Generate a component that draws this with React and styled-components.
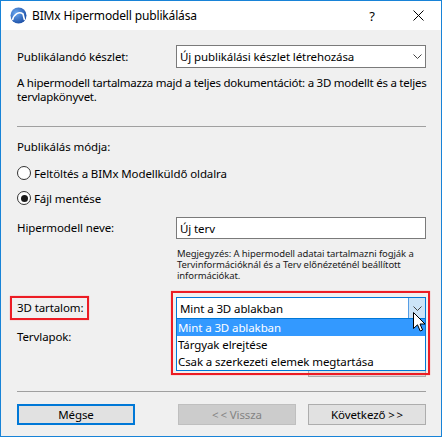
import React from 'react'
import styled, { createGlobalStyle } from 'styled-components'

const GlobalStyle = createGlobalStyle`
	html, body {
		margin: 0;
		padding: 0;
		background: #ffffff;
	}
	body {
		font-family: "Noto Sans", "Open Sans", sans-serif;
		font-size: 11.5px;
		letter-spacing: -0.1px;
		color: #000;
	}
	* {
		box-sizing: border-box;
	}
`

const Window = styled.div`
	width: 442px;
	height: 437px;
	border: 1px solid #1883d7;
	background: #f0f0f0;
	display: flex;
	flex-direction: column;
`

const TitleBar = styled.div`
	height: 29px;
	background: #fff;
	display: flex;
	align-items: center;
	padding-left: 9px;
`

const Title = styled.span`
	margin-left: 5px;
	flex: 1;
	font-size: 12px;
	letter-spacing: -0.15px;
	line-height: 16px;
`

const TitleButton = styled.span`
	width: ${p => p.w}px;
	display: flex;
	justify-content: center;
	align-items: center;
	font-size: 13px;
`

const Body = styled.div`
	flex: 1;
	display: flex;
	flex-direction: column;
	padding: 0 15px 0 16px;
`

const Row = styled.div`
	display: flex;
	align-items: center;
	margin-top: ${p => p.top}px;
`

const Label = styled.div`
	width: 159px;
	flex-shrink: 0;
	line-height: 14px;
`

const Highlight = styled.span`
	display: inline-block;
	margin-left: -7px;
	padding: 3px 4px 3px 5px;
	border: 2px solid #ec1c24;
	box-shadow: 0 0 1px #ff8080;
	line-height: 14px;
`

const Field = styled.div`
	flex: 1;
	height: ${p => p.h || 23}px;
	background: #fff;
	border: 1px solid ${p => (p.focus ? '#0078d7' : '#7a7a7a')};
	display: flex;
	align-items: center;
	padding-left: 3px;
`

const FieldText = styled.span`
	flex: 1;
	white-space: nowrap;
`

const DropArrow = styled.span`
	width: 17px;
	height: 100%;
	display: flex;
	align-items: center;
	justify-content: center;
	background: ${p => (p.active ? '#cce4f7' : 'transparent')};
	border-left: 1px solid ${p => (p.active ? '#569de5' : 'transparent')};
`

const Description = styled.p`
	margin: 8px 0 0;
	line-height: 14px;
	width: 424px;
	letter-spacing: -0.25px;
`

const Separator = styled.div`
	height: 1px;
	background: #a0a0a0;
	margin-top: ${p => p.top}px;
`

const SectionTitle = styled.div`
	margin-top: 13px;
	line-height: 14px;
`

const RadioRow = styled.div`
	display: flex;
	align-items: center;
	height: 16px;
	margin-top: ${p => p.top}px;
`

const RadioCircle = styled.span`
	width: 14px;
	height: 14px;
	border-radius: 50%;
	border: 1px solid #333;
	background: #fff;
	display: flex;
	align-items: center;
	justify-content: center;
	margin-right: 3px;

	&::after {
		content: '';
		width: 7px;
		height: 7px;
		border-radius: 50%;
		background: #1a1a1a;
		display: ${p => (p.checked ? 'block' : 'none')};
	}
`

const Note = styled.div`
	margin: 9px 0 0 160px;
	font-size: 9.5px;
	line-height: 11px;
	color: #1a1a1a;
	width: 250px;
`

const ComboWrap = styled.div`
	flex: 1;
	position: relative;
`

const Popup = styled.div`
	position: absolute;
	left: 0;
	right: 0;
	top: 100%;
	background: #fff;
	border: 1px solid #0078d7;
	border-top: none;
	z-index: 2;
`

const Option = styled.div`
	height: 17px;
	line-height: 17px;
	padding-left: 1px;
	background: ${p => (p.selected ? '#3399ff' : '#fff')};
	color: ${p => (p.selected ? '#fff' : '#000')};
	white-space: nowrap;
`

const RedFrame = styled.div`
	position: absolute;
	left: -5px;
	right: -4px;
	top: -6px;
	height: 84px;
	border: 2px solid #ec1c24;
	box-shadow: 0 0 1px #ff8080;
	z-index: 3;
	pointer-events: none;
`

const Cursor = styled.svg`
	position: absolute;
	left: 237px;
	top: 15px;
	z-index: 4;
`

const Button = styled.button`
	width: 118px;
	height: ${p => p.h || 21}px;
	font-family: inherit;
	font-size: 11.5px;
	letter-spacing: -0.1px;
	padding: 0;
	background: ${p => (p.disabled ? '#cccccc' : '#e1e1e1')};
	color: ${p => (p.disabled ? '#838383' : '#000')};
	border: ${p => (p.primary ? '2px solid #0078d7' : p.disabled ? '1px solid #bfbfbf' : '1px solid #adadad')};
	margin-right: ${p => p.gap || 0};
`

const ButtonRow = styled.div`
	display: flex;
	margin-top: 12px;
`

const HiddenRow = styled.div`
	display: flex;
	justify-content: flex-end;
	margin-top: 11px;
`

function Chevron() {
	return (
		<svg width="9" height="5" viewBox="0 0 9 5">
			<path d="M0.5 0.5 L4.5 4.5 L8.5 0.5" stroke="#444" fill="none" />
		</svg>
	)
}

function Logo() {
	return (
		<svg width="17" height="17" viewBox="0 0 17 17">
			<defs>
				<radialGradient id="ball" cx="35%" cy="35%" r="70%">
					<stop offset="0%" stopColor="#6aa8f0" />
					<stop offset="100%" stopColor="#1c4fa6" />
				</radialGradient>
			</defs>
			<circle cx="8.5" cy="8.5" r="8" fill="url(#ball)" />
			<path d="M2.5 13 C4 7 9 4 13 7 L14.5 13" stroke="#fff" strokeWidth="1.6" fill="none" />
		</svg>
	)
}

export default function App() {
	return (
		<>
			<GlobalStyle />
			<Window>
				<TitleBar>
					<Logo />
					<Title>BIMx Hipermodell publikálása</Title>
					<TitleButton w={46}>?</TitleButton>
					<TitleButton w={46}>
						<svg width="11" height="11" viewBox="0 0 11 11">
							<path d="M0.5 0.5 L10.5 10.5 M10.5 0.5 L0.5 10.5" stroke="#000" strokeWidth="1" />
						</svg>
					</TitleButton>
				</TitleBar>
				<Body>
					<Row top={15}>
						<Label>Publikálandó készlet:</Label>
						<Field>
							<FieldText>Új publikálási készlet létrehozása</FieldText>
							<DropArrow>
								<Chevron />
							</DropArrow>
						</Field>
					</Row>
					<Description>
						A hipermodell tartalmazza majd a teljes dokumentációt: a 3D modellt és a teljes
						tervlapkönyvet.
					</Description>
					<Separator top={22} />
					<SectionTitle>Publikálás módja:</SectionTitle>
					<RadioRow top={11}>
						<RadioCircle />
						Feltöltés a BIMx Modellküldő oldalra
					</RadioRow>
					<RadioRow top={9}>
						<RadioCircle checked />
						Fájl mentése
					</RadioRow>
					<Row top={11}>
						<Label>Hipermodell neve:</Label>
						<Field h={22}>
							<FieldText>Új terv</FieldText>
						</Field>
					</Row>
					<Note>
						Megjegyzés: A hipermodell adatai tartalmazni fogják a Tervinformációknál és a
						Terv előnézeténél beállított információkat.
					</Note>
					<Row top={15}>
						<Label>
							<Highlight>3D tartalom:</Highlight>
						</Label>
						<ComboWrap>
							<Field h={22} focus>
								<FieldText>Mint a 3D ablakban</FieldText>
								<DropArrow active>
									<Chevron />
								</DropArrow>
							</Field>
							<Popup>
								<Option selected>Mint a 3D ablakban</Option>
								<Option>Tárgyak elrejtése</Option>
								<Option>Csak a szerkezeti elemek megtartása</Option>
							</Popup>
							<RedFrame />
							<Cursor width="13" height="20" viewBox="0 0 13 20">
								<path
									d="M0.5 0.5 L0.5 16.5 L4.5 12.8 L7.2 19 L9.6 18 L7 12 L12 12 Z"
									fill="#fff"
									stroke="#000"
									strokeWidth="1"
								/>
							</Cursor>
						</ComboWrap>
					</Row>
					<Row top={10}>
						<Label>Tervlapok:</Label>
					</Row>
					<HiddenRow>
						<Button h={22} />
					</HiddenRow>
					<Separator top={14} />
					<ButtonRow>
						<Button primary gap="auto">
							Mégse
						</Button>
						<Button disabled gap="12px">
							&lt;&#8201;&lt; Vissza
						</Button>
						<Button>Következő &gt;&#8201;&gt;</Button>
					</ButtonRow>
				</Body>
			</Window>
		</>
	)
}
